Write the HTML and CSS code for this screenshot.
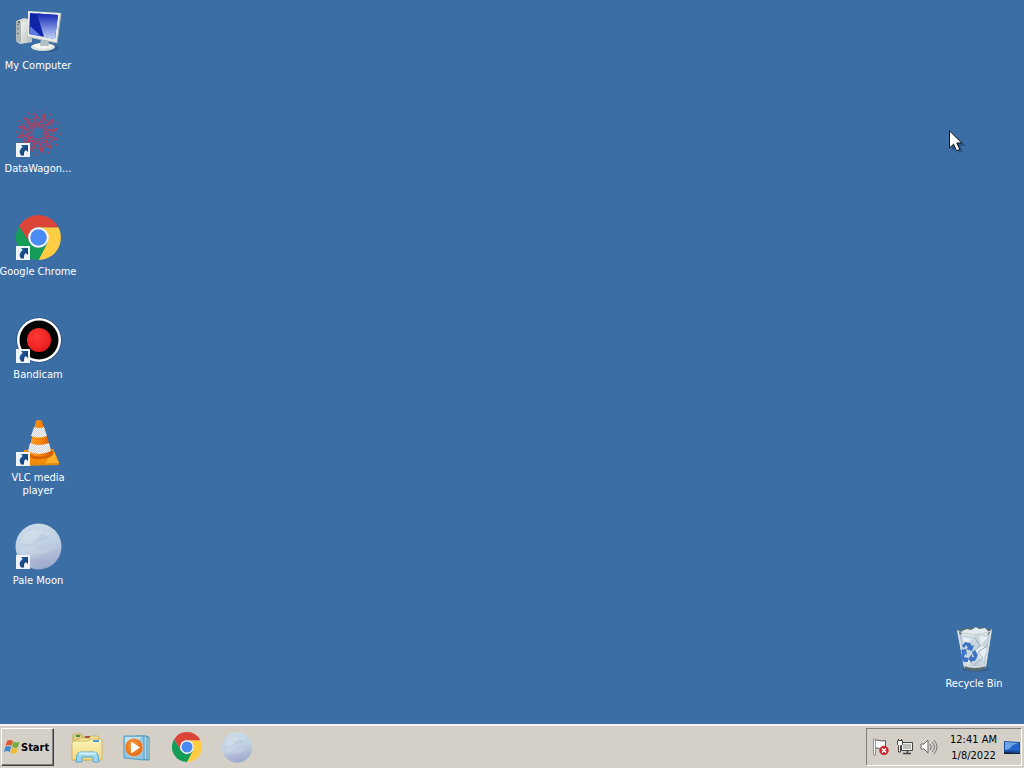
FILE: index.html
```html
<!DOCTYPE html>
<html lang="en">
<head>
<meta charset="utf-8">
<title>Desktop</title>
<link rel="stylesheet" href="styles.css">
</head>
<body>
<svg class="defs" width="0" height="0" aria-hidden="true">
  <defs>
    <linearGradient id="glare" x1="0" y1="0" x2="0" y2="1"><stop offset="0" stop-color="#1226b4"/><stop offset="1" stop-color="#c4d6fb"/></linearGradient>
    <linearGradient id="silver" x1="0" y1="0" x2="1" y2="1"><stop offset="0" stop-color="#f4f5f1"/><stop offset="1" stop-color="#b4bbb9"/></linearGradient>
    <linearGradient id="arrow" x1="0" y1="0" x2="1" y2="1"><stop offset="0" stop-color="#2767a8"/><stop offset="1" stop-color="#0b2c66"/></linearGradient>
    <linearGradient id="cone" x1="0" y1="0" x2="1" y2="0"><stop offset="0" stop-color="#f9a03a"/><stop offset=".45" stop-color="#ff8a08"/><stop offset="1" stop-color="#d45c00"/></linearGradient>
    <linearGradient id="moonfill" x1=".3" y1="0" x2=".6" y2="1"><stop offset="0" stop-color="#cbdbe8"/><stop offset=".5" stop-color="#bfd0e2"/><stop offset="1" stop-color="#9da8cb"/></linearGradient>
    <linearGradient id="folder" x1="0" y1="0" x2="0" y2="1"><stop offset="0" stop-color="#fdf5b8"/><stop offset="1" stop-color="#eed87d"/></linearGradient>
    <radialGradient id="record" cx=".4" cy=".35" r=".7"><stop offset="0" stop-color="#ff3a36"/><stop offset="1" stop-color="#e51b1b"/></radialGradient>
    <radialGradient id="play" cx=".45" cy=".4" r=".6"><stop offset="0" stop-color="#ffa448"/><stop offset="1" stop-color="#dc6510"/></radialGradient>
    <pattern id="mesh" width="2" height="2" patternUnits="userSpaceOnUse"><path d="M0 0h2v2H0z" fill="#f4f4f4"/><path d="M0 0h1v1H0zM1 1h1v1H1z" fill="#d2d5d8"/></pattern>
    <symbol id="shortcut" viewBox="0 0 14 14"><path d="M0 0h14v14H0z" fill="#eef3f6"/><path d="M5 2h7v7l-2.200-2Q7.500 8.500 8 12.500H5Q1.500 8 6.500 4z" fill="url(#arrow)"/></symbol>
    <symbol id="chrome" viewBox="0 0 48 48">
      <path d="M24 13h21.200A24 24 0 0 1 24 48L33.500 29.500z" fill="#ffcd42"/>
      <path d="M3.200 12L14.500 29.500A11 11 0 0 1 24 13h21.300A24 24 0 0 0 3.200 12z" fill="#da4538"/>
      <path d="M3.200 12L14.500 29.500Q18 35 24 35Q29 35 33.500 29.500L24 48A24 24 0 0 1 3.200 12z" fill="#169c59"/>
      <circle cx="24" cy="24" r="11" fill="#f4f4f4"/><circle cx="24" cy="24" r="8.800" fill="#4a8af4"/>
    </symbol>
    <symbol id="moon" viewBox="0 0 48 48"><circle cx="24" cy="24" r="23.500" fill="url(#moonfill)"/><path d="M9 12q9-7 17-4t11 1q-3 5-10 5t-9 5-12 1z" fill="#dce8ed" opacity=".4"/><path d="M25 12q4-4 7 0t-3 5-7 2z" fill="#a9bfda" opacity=".35"/><path d="M6 27q9-6 16-1t17-3q-4 9-14 9T6 34z" fill="#d9e2ee" opacity=".3"/><path d="M12 39q10-5 24-3-8 9-24 3z" fill="#aea6cb" opacity=".3"/></symbol>
    <g id="branch" fill="none" stroke-linecap="round"><path d="M24 18l1-4 3-2v-4l2-3M25 14l-4-3 1-4-2-3M28 11l3-1M24 18l-2-1" stroke-width="1"/><path d="M25 2h.1M22 7h.1M30 6h.1M27 13h.1M23 15h.1M25 9h.1" stroke-width="2"/></g>
  </defs>
</svg>

<main class="desktop">
  <nav class="shortcuts" aria-label="Desktop shortcuts">
    <a class="item" href="#computer">
      <svg class="icon" viewBox="0 0 48 48" aria-hidden="true">
        <path d="M1 13l8-3 8 2v22L5 36l-4-3z" fill="#d9dbd4"/><path d="M1 13l5 2v20l-5-2z" fill="#aeb6b5"/><path d="M6 15l11-3v21L6 35z" fill="url(#silver)"/><path d="M2 16l2 1M2 20l2 1M2 25l2 1" stroke="#5c696c"/><circle cx="4" cy="14" r="1" fill="#243f4c"/>
        <ellipse cx="31" cy="40" rx="13" ry="4" fill="#244f80" opacity=".5"/><ellipse cx="28" cy="39" rx="12" ry="4" fill="#dfe3df"/><ellipse cx="28" cy="38" rx="9" ry="2.500" fill="#f5f6f2"/><path d="M26 30h7l1 8h-9z" fill="#b5bfc2"/>
        <path d="M13 3l33 2-4 30-29-6z" fill="#e8ebe7"/><path d="M46 5l-4 30-29-6" fill="none" stroke="#a7b3b7"/><path d="M15 5l28 2-3 24-26-5z" fill="#1024a8"/><path d="M22 5.500l21 1.500-3 24-11-2z" fill="url(#glare)"/><path d="M15 18l11 10-12-2z" fill="#5b7be0"/>
      </svg><span>My Computer</span></a>
    <a class="item" href="#datawagon">
      <svg class="icon" viewBox="0 0 48 48" aria-hidden="true">
        <g stroke="#b0405f" transform="translate(-1 -2)"><use href="#branch"/><use href="#branch" transform="rotate(30 24 24)"/><use href="#branch" transform="rotate(60 24 24)"/><use href="#branch" transform="rotate(90 24 24)"/><use href="#branch" transform="rotate(120 24 24)"/><use href="#branch" transform="rotate(150 24 24)"/><use href="#branch" transform="rotate(180 24 24)"/><use href="#branch" transform="rotate(210 24 24)"/><use href="#branch" transform="rotate(240 24 24)"/><use href="#branch" transform="rotate(270 24 24)"/><use href="#branch" transform="rotate(300 24 24)"/><use href="#branch" transform="rotate(330 24 24)"/></g>
        <use href="#shortcut" x="1" y="32" width="14" height="14"/>
      </svg><span>DataWagon...</span></a>
    <a class="item" href="#chrome-app">
      <svg class="icon" viewBox="0 0 48 48" aria-hidden="true"><use href="#chrome" x="1" y="1" width="45" height="45"/><use href="#shortcut" x="1" y="32" width="14" height="14"/></svg><span>Google Chrome</span></a>
    <a class="item" href="#bandicam">
      <svg class="icon" viewBox="0 0 48 48" aria-hidden="true"><circle cx="24" cy="23" r="22.500" fill="#17395f"/><circle cx="24" cy="23" r="22" fill="#fff"/><circle cx="24" cy="23" r="19.500" fill="#050505"/><circle cx="24" cy="23" r="12" fill="url(#record)"/><use href="#shortcut" x="1" y="32" width="14" height="14"/></svg><span>Bandicam</span></a>
    <a class="item" href="#vlc">
      <svg class="icon" viewBox="0 0 48 48" aria-hidden="true">
        <path d="M9 30l29-1 6 14-36 3z" fill="#f38b0b"/><path d="M38 29l6 14-14 1z" fill="#ffb026"/><path d="M8 44l36-1v2l-36 1z" fill="#e08a10"/><path d="M12 33Q14 40 25 39Q38 39 39 32L36 29H14z" fill="#d56306"/>
        <path d="M21 1q3-2 6 0l10 32q-12 7-24 0z" fill="url(#cone)"/><path d="M19 7q5 2 10 0l3 9q-8 3-16 0zM15 23q9 4 19 0l2 8q-12 6-23 0z" fill="url(#mesh)"/>
        <use href="#shortcut" x="1" y="32" width="14" height="14"/>
      </svg><span>VLC media<br>player</span></a>
    <a class="item" href="#palemoon">
      <svg class="icon" viewBox="0 0 48 48" aria-hidden="true"><use href="#moon" x="0" y="0" width="47" height="47"/><use href="#shortcut" x="1" y="32" width="14" height="14"/></svg><span>Pale Moon</span></a>
  </nav>
  <a class="item bin" href="#recycle">
    <svg class="icon" viewBox="0 0 48 48" aria-hidden="true">
      <ellipse cx="25" cy="43" rx="14" ry="3" fill="#285582" opacity=".5"/>
      <path d="M6 4l35-1-6 39q-11 5-22 0z" fill="#a5b8c7"/><path d="M7 4q16-5 33-1l-2 5q-15 4-30 0z" fill="#56676d"/><path d="M11 5l5-2 4 1 5-3 3 2 6-1 4 4-3 4-25 1z" fill="#e0e9ed"/>
      <path d="M10 9l12 1 5-2 11 1-5 30-19 1z" fill="#c7d5df"/><path d="M11 11l10 2-7 7zM28 10l9 1-7 8zM22 25l9-5 5 3-4 12zM14 32l5 3-2 5z" fill="#e8eef2"/><path d="M24 12l5 8-6 5M36 20l-9 6 5 6-9 7" fill="none" stroke="#98aebf"/>
      <path d="M7 5l7 37M40 5l-6 36" stroke="#dce5e9" stroke-width="1.500"/><path d="M6 5q18 7 34 0" fill="none" stroke="#c4cecf"/><path d="M13 39q11 4 22 0l-1 4q-10 4-20 0z" fill="#58686d"/><path d="M13 39q11 4 22 0" fill="none" stroke="#d6dcdc" stroke-width="2"/>
      <g fill="#3d74c8"><path d="M11 20l3-4 5 1 2 3 2-1-2 6-6-2 2-1-2-3-2 3z"/><path d="M10 24l5-1 1 6-2-1-1 3 4 1v4h-4l-4-5 2-4z"/><path d="M21 26l3-2 3 5-3 6h-3v2l-4-4 4-5v3h2z"/></g>
    </svg><span>Recycle Bin</span></a>
  <svg class="pointer" viewBox="0 0 20 26" aria-hidden="true"><path d="M3 3v18l4-4 3 6 4-1-3-6h6z" fill="#153b66" opacity=".45"/><path d="M.5.8v17.200l4-3.800 3 6.600 3.300-1.500-3-6.300h5z" fill="#fff" stroke="#07101c"/></svg>
</main>

<footer class="taskbar">
  <button class="start" type="button">
    <svg class="flag" viewBox="0 0 16 16" aria-hidden="true"><path d="M3 2q3-2 6 0L7.500 7q-3-2-6 0z" fill="#e2582c"/><path d="M9.500 2.500q3 2 6 0L14 8q-3 2-6-.5z" fill="#74ad3d"/><path d="M1.200 8q3-2 6 0l-1.500 5q-3-2-5.700 0z" fill="#408bcd"/><path d="M7.900 8.500q3 2 6 0L12.300 14q-3 1.500-6-.5z" fill="#f2b92d"/></svg>Start</button>
  <nav class="pinned" aria-label="Pinned programs">
    <button type="button" aria-label="Windows Explorer"><svg viewBox="0 0 32 32" aria-hidden="true">
      <path d="M2 5q0-2 2-2h6l2 3h8v23H2z" fill="#e4cf7c" stroke="#c3a95c"/><path d="M5 4h4v2H5z" fill="#498b43"/><path d="M9 7h9l2-2h7l1 2v21H4V10z" fill="#f6e595" stroke="#cfb666"/><path d="M14 5h5v2h-5z" fill="#a35945"/><path d="M20 8h9q2 0 2 2v19H1V12q0-2 2-2h14z" fill="url(#folder)" stroke="#d0b566"/><path d="M22 9h6v2h-6z" fill="#4c9bd3"/><path d="M5 31l1-7q1-3 4-3h13q3 0 4 3l1 7h-6v-5H11v5z" fill="#9bd7f1" stroke="#5aa6cc"/><path d="M8 22.500h17" stroke="#daf3fb" stroke-width="2"/></svg></button>
    <button type="button" aria-label="Windows Media Player"><svg viewBox="0 0 32 32" aria-hidden="true">
      <path d="M19 6h9v23l-8-1z" fill="#c9e7f2" stroke="#438ba9"/><path d="M16 5h10v24l-8-1z" fill="#afd9ec" stroke="#438ba9"/><path d="M3 5h20v24L3 27z" fill="#8fc8e6" stroke="#4e9cc1"/><path d="M4 6h17L4 21z" fill="#c0e4f3"/><circle cx="13" cy="16.500" r="9" fill="url(#play)" stroke="#e9b38b"/><path d="M10 10.500l9 6-9 6z" fill="#fff"/></svg></button>
    <button type="button" aria-label="Google Chrome"><svg viewBox="0 0 32 32" aria-hidden="true"><use href="#chrome" x="1" y="1" width="30" height="30"/></svg></button>
    <button type="button" aria-label="Pale Moon"><svg viewBox="0 0 32 32" aria-hidden="true"><use href="#moon" x="0" y="1" width="32" height="31"/></svg></button>
  </nav>
  <section class="tray" aria-label="Notification area">
    <button type="button" aria-label="Action Center"><svg viewBox="0 0 18 18" aria-hidden="true"><path d="M2.500 2.500q3-1 5 0t6 0v8q-4 1-6 0t-5 0" fill="#fafafa" stroke="#555"/><path d="M1.500 1h2v16h-2z" fill="#fff" stroke="#555" stroke-width=".6"/><circle cx="12" cy="12.500" r="4.700" fill="#c92731"/><path d="M10 10.500l4 4m0-4l-4 4" stroke="#fff" stroke-width="1.500"/></svg></button>
    <button type="button" aria-label="Network"><svg viewBox="0 0 18 18" aria-hidden="true"><path d="M5.500 4.500h11v8h-11z" fill="#bdbdb8" stroke="#444"/><path d="M6.500 5.500h9v6h-9z" fill="none" stroke="#f2f2f0"/><path d="M7 15.500h8M11.500 13v2" stroke="#444" stroke-width="1.500"/><path d="M1.500 2.500h5v4l-1 1h-1v6.500h-2V7.500l-1-1z" fill="#f4f4f4" stroke="#444"/><path d="M2.500 1v2M5.500 1v2" stroke="#444"/></svg></button>
    <button type="button" aria-label="Volume"><svg viewBox="0 0 18 18" aria-hidden="true"><path d="M1 6h3l4-4v13l-4-4H1z" fill="#fff" stroke="#666"/><path d="M10 6q3 3 0 6M12 4q5 5 0 10M14 2q6 7 0 14" fill="none" stroke="#777"/></svg></button>
    <time class="clock" datetime="2022-01-08T00:41"><span>12:41 AM</span><span>1/8/2022</span></time>
    <button type="button" aria-label="Show desktop"><svg viewBox="0 0 18 18" aria-hidden="true"><path d="M1 3l16 1v11H1z" fill="#1c4c9c"/><path d="M2 4l14 1v8l-14-1z" fill="#2465c9"/><path d="M2 4l14 1q-6 1-8 4t-6 3z" fill="#6ea5e6"/><path d="M1 14l16 1v1H1z" fill="#16243a"/></svg></button>
  </section>
</footer>
</body>
</html>
```
FILE: styles.css
```css
* { box-sizing: border-box; }

body {
  margin: 0;
  min-height: 100vh;
  display: flex;
  flex-direction: column;
  background: #3b6ea5;
  color: #000;
  font: 11px/13px "DejaVu Sans Condensed", "Noto Sans", sans-serif;
}

button {
  font: inherit;
  color: inherit;
  border: 0;
  padding: 0;
  background: none;
}

.defs { position: absolute; }

.desktop {
  position: relative;
  flex: 1;
  display: flex;
  justify-content: space-between;
  align-items: flex-start;
  padding: 8px 12px 34px 0;
}

.shortcuts {
  display: grid;
  grid-auto-rows: 103px;
}

.item {
  width: 76px;
  display: flex;
  flex-direction: column;
  align-items: center;
  gap: 3px;
  color: #fff;
  text-align: center;
  text-decoration: none;
  white-space: nowrap;
}

.icon {
  width: 48px;
  height: 48px;
  flex: none;
  margin-left: 2px;
}

.bin { align-self: flex-end; }

.pointer {
  position: absolute;
  left: 949px;
  top: 130px;
  width: 20px;
  height: 26px;
}

.taskbar {
  display: flex;
  align-items: stretch;
  height: 44px;
  padding: 2px 2px 2px 1px;
  background: #d4d0c8;
  border-top: 2px solid #f4f3f0;
}

.start {
  display: flex;
  align-items: center;
  gap: 1px;
  padding: 0 4px 0 2px;
  font-weight: 700;
  border: 1px solid;
  border-color: #fff #404040 #404040 #fff;
  box-shadow: inset -1px -1px #808080;
}

.flag { width: 16px; height: 16px; }

.pinned {
  flex: 1;
  display: flex;
  padding-left: 8px;
}

.pinned button {
  width: 50px;
  display: grid;
  place-items: center;
}

.pinned svg { width: 32px; height: 32px; }

.tray {
  display: flex;
  align-items: center;
  gap: 6px;
  padding: 0 0 0 5px;
  border: 1px solid;
  border-color: #808080 #fff #fff #808080;
}

.tray svg { display: block; width: 18px; height: 18px; }

.clock {
  display: grid;
  padding: 2px 0 0 6px;
  line-height: 16px;
  text-align: center;
}
```
